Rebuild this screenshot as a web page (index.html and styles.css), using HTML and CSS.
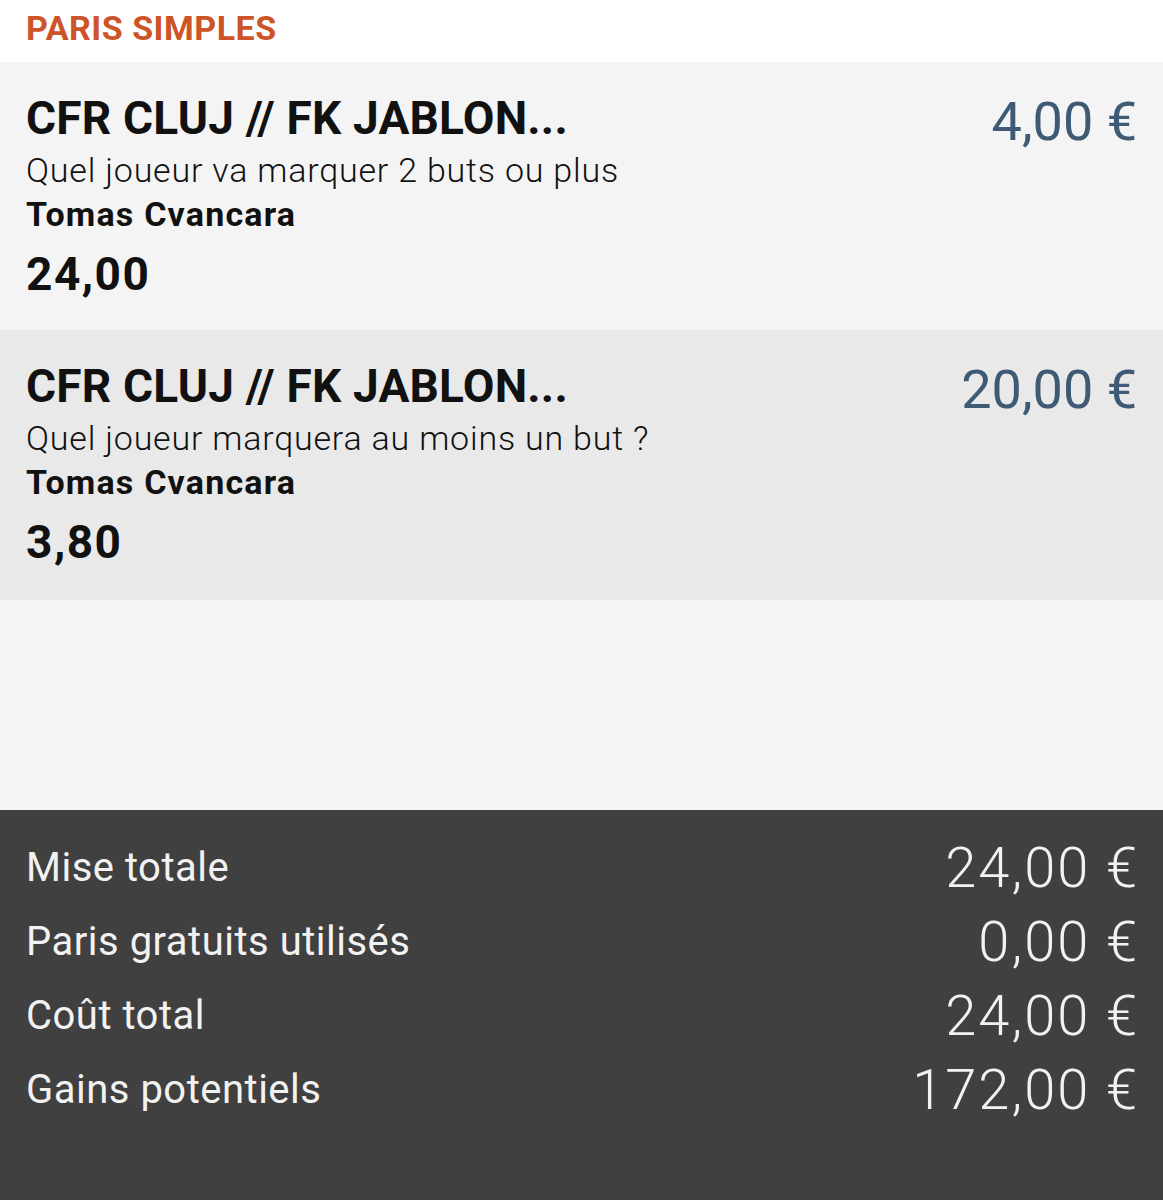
FILE: index.html
```html
<!DOCTYPE html>
<html lang="fr">
<head>
    <meta charset="UTF-8">
    <title>Paris simples</title>
    <link rel="stylesheet" href="styles.css">
</head>
<body>
<div class="slip">
    <div class="head">PARIS SIMPLES</div>

    <div class="bet">
        <div class="info">
            <div class="match">CFR CLUJ // FK JABLON...</div>
            <div class="market">Quel joueur va marquer 2 buts ou plus</div>
            <div class="pick">Tomas Cvancara</div>
            <div class="odds">24,00</div>
        </div>
        <div class="stake">4,00 €</div>
    </div>

    <div class="bet dark">
        <div class="info">
            <div class="match">CFR CLUJ // FK JABLON...</div>
            <div class="market">Quel joueur marquera au moins un but ?</div>
            <div class="pick">Tomas Cvancara</div>
            <div class="odds">3,80</div>
        </div>
        <div class="stake">20,00 €</div>
    </div>

    <div class="empty"></div>

    <div class="total">
        <div class="line"><span class="label">Mise totale</span><span class="value">24,00 €</span></div>
        <div class="line"><span class="label">Paris gratuits utilisés</span><span class="value">0,00 €</span></div>
        <div class="line"><span class="label">Coût total</span><span class="value">24,00 €</span></div>
        <div class="line"><span class="label">Gains potentiels</span><span class="value">172,00 €</span></div>
    </div>
</div>
</body>
</html>
```

FILE: styles.css
```css
* {
    margin: 0;
    padding: 0;
}

body {
    font-family: Roboto, "Liberation Sans", sans-serif;
    background-color: #f4f4f4;
    color: #111111;
}

.slip {
    width: 1163px;
}

.head {
    height: 62px;
    padding-left: 26px;
    line-height: 56px;
    font-size: 34px;
    font-weight: 700;
    letter-spacing: 0.5px;
    color: #cc5426;
    background-color: #ffffff;
    box-sizing: border-box;
}

.bet {
    display: flex;
    justify-content: space-between;
    align-items: flex-start;
    padding: 32px 26px 26px 26px;
    background-color: #f4f4f4;
}

.bet.dark {
    background-color: #e9e9e9;
    padding-bottom: 28px;
}

.match {
    font-size: 46px;
    line-height: 48px;
    font-weight: 700;
    letter-spacing: 0.2px;
}

.market {
    margin-top: 6px;
    font-size: 34px;
    line-height: 44px;
    font-weight: 300;
    letter-spacing: 0.8px;
}

.pick {
    font-size: 34px;
    line-height: 44px;
    font-weight: 700;
    letter-spacing: 1.2px;
}

.odds {
    margin-top: 8px;
    font-size: 46px;
    line-height: 60px;
    font-weight: 700;
    letter-spacing: 1.5px;
}

.stake {
    font-size: 54px;
    line-height: 56px;
    color: #3e5a74;
}

.empty {
    height: 210px;
}

.total {
    height: 390px;
    padding: 21px 26px 0 26px;
    background-color: #404040;
    color: #f2f2f2;
    box-sizing: border-box;
}

.line {
    display: flex;
    justify-content: space-between;
    align-items: flex-start;
    height: 74px;
}

.label {
    font-size: 40px;
    line-height: 74px;
    letter-spacing: 0.5px;
}

.value {
    font-size: 56px;
    line-height: 74px;
    font-weight: 300;
    letter-spacing: 2px;
    margin-right: -2px;
}
```
